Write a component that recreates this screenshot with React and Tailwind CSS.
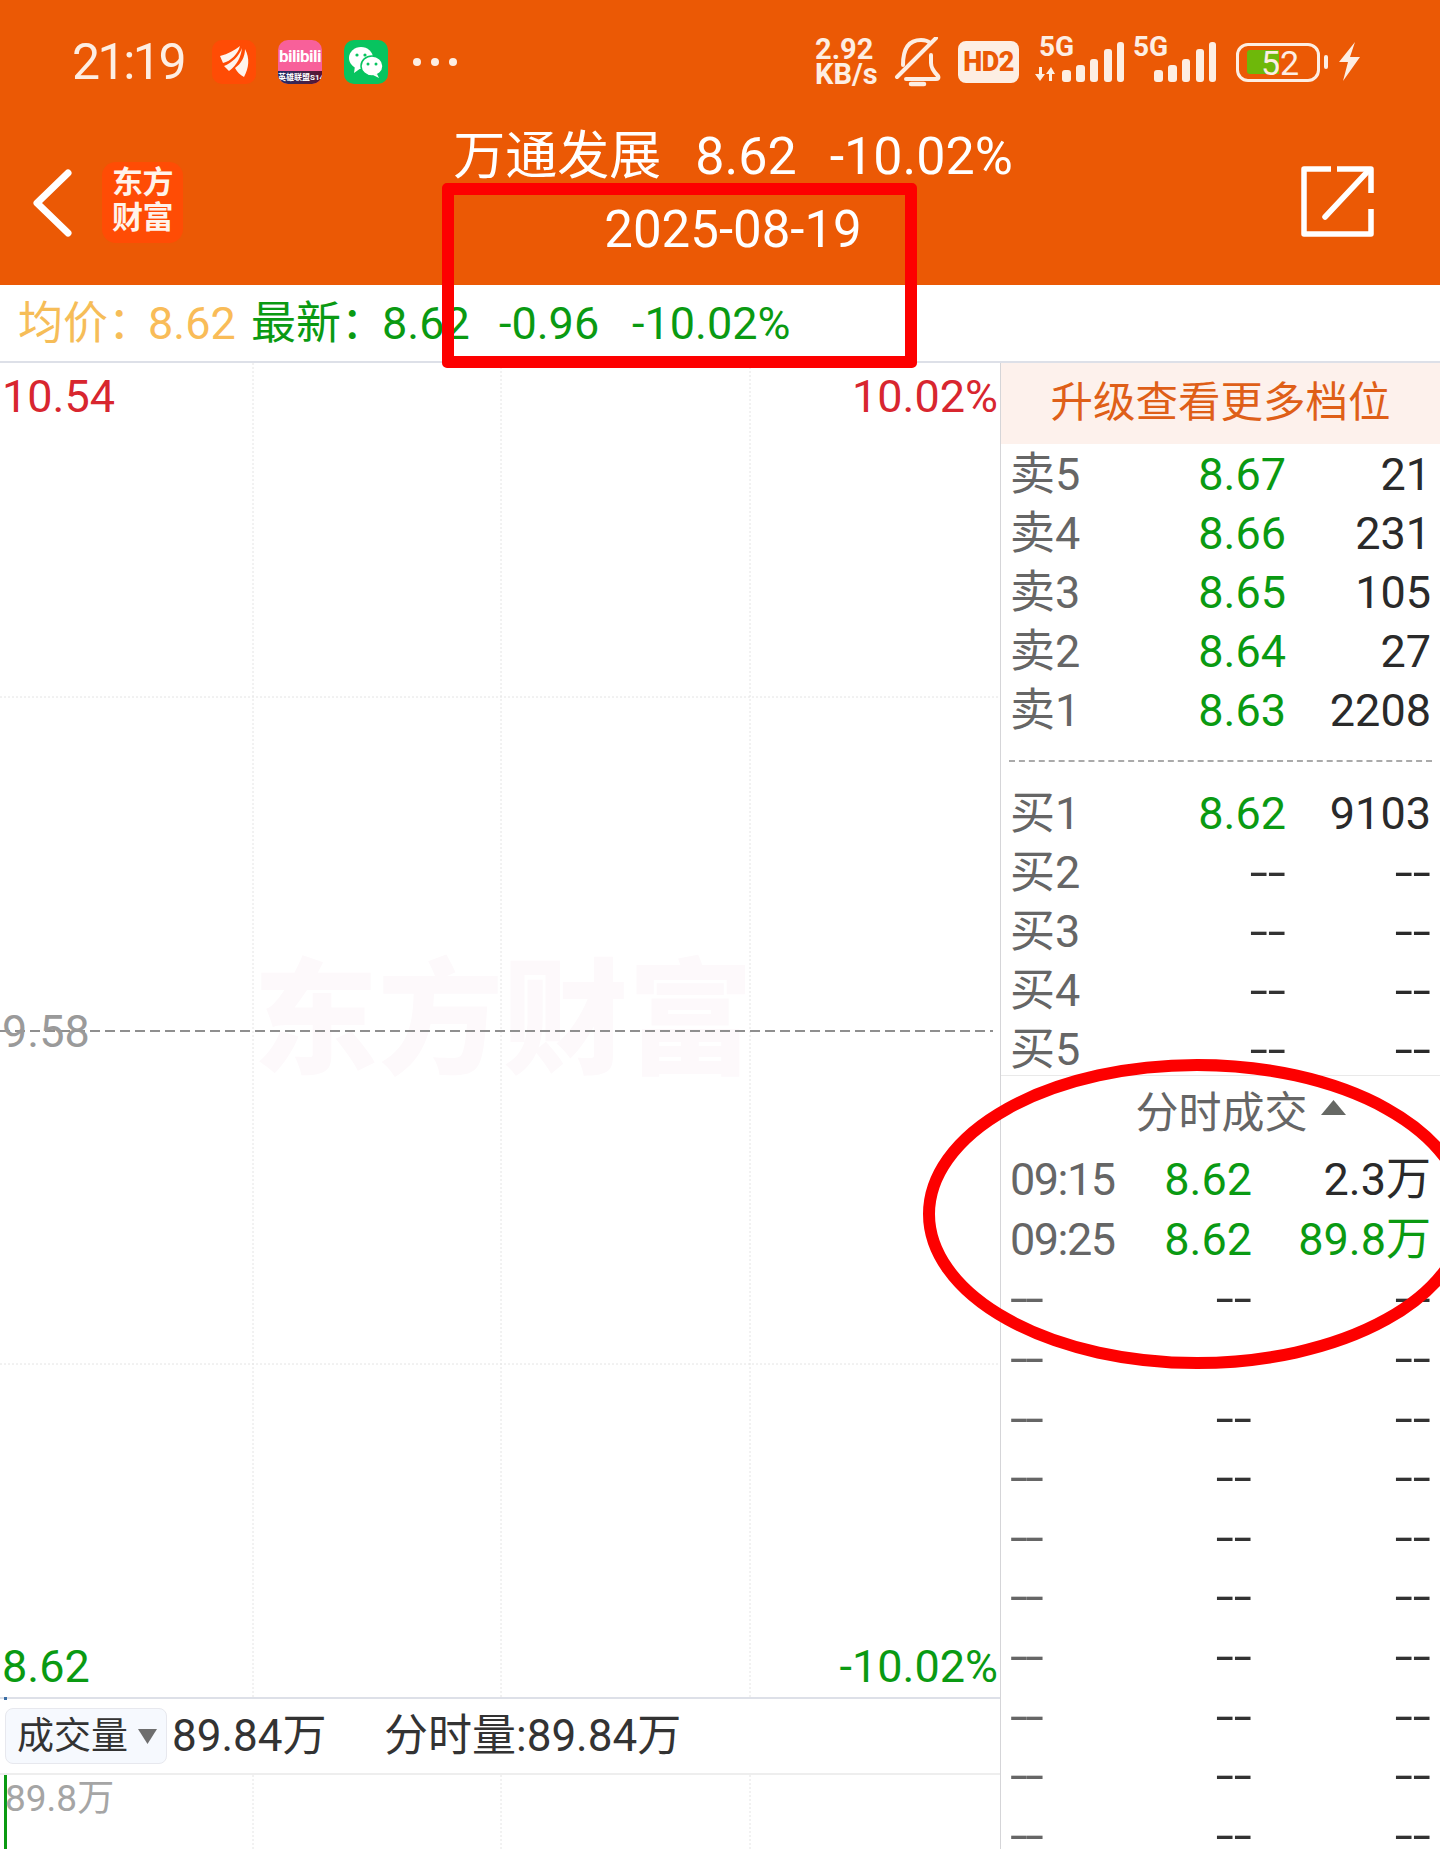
import React from 'react';

const FONT = "font-['Roboto','Noto_Sans_CJK_SC',sans-serif]";

const sells = [
  ['卖5', '8.67', '21'],
  ['卖4', '8.66', '231'],
  ['卖3', '8.65', '105'],
  ['卖2', '8.64', '27'],
  ['卖1', '8.63', '2208'],
];

const buys = [
  ['买1', '8.62', '9103'],
  ['买2', '--', '--'],
  ['买3', '--', '--'],
  ['买4', '--', '--'],
  ['买5', '--', '--'],
];

const trades = [
  ['09:15', '8.62', '2.3万', 'text-[#2a2a2a]'],
  ['09:25', '8.62', '89.8万', 'text-[#0a9a12]'],
  ...Array.from({ length: 10 }, () => ['--', '--', '--', 'text-[#333]']),
];

// the two hyphens are wider in the phone font
const Val = ({ v, left }) => {
  if (v !== '--') return v;
  return (
    <span className={left ? 'inline-block origin-left scale-x-[1.45]' : 'inline-block origin-right scale-x-[1.45]'}>--</span>
  );
};

const BellOff = () => (
  <svg width="47" height="50" viewBox="0 0 47 50" fill="none" stroke="#fdeee3" strokeWidth="4" strokeLinecap="round" strokeLinejoin="round">
    <path d="M9 28C9 12 15 3 27 3C31 3 34 4 36 6" />
    <path d="M37 18V26C37 32 41 36 44 39C45 41 44 42 42 42H12" />
    <path d="M42 1L3 40" />
    <path d="M17 47H30" strokeWidth="4.5" />
  </svg>
);

const SignalBars = () => (
  <svg width="62" height="40" viewBox="0 0 62 40" fill="#fdeee3">
    <rect x="0" y="28" width="9" height="12" rx="3" />
    <rect x="14" y="23" width="9" height="17" rx="3" />
    <rect x="28" y="17" width="8" height="23" rx="3" />
    <rect x="42" y="7" width="8" height="33" rx="3" />
    <rect x="55" y="0" width="7" height="40" rx="3" />
  </svg>
);

const StatusBar = () => (
  <div className="flex h-[124px] items-center pl-[72px] text-[#fdeee3]">
    <span className="w-[140px] text-[50px] leading-none tracking-[-2.5px]">21:19</span>
    <svg width="44" height="44" viewBox="0 0 44 44">
      <rect width="44" height="44" rx="10" fill="#ff4c05" />
      <g fill="#fff4ec">
        <path d="M8 16C16 14 23 10 28 6C26 14 19 21 11 23Z" />
        <path d="M30 8C29 17 25 25 17 31L12 26C20 23 27 16 30 8Z" />
        <path d="M33 9C38 18 37 28 32 37C28 35 25 32 23 28C29 24 33 17 33 9Z" />
      </g>
    </svg>
    <div className="ml-[22px] flex h-[44px] w-[44px] flex-col items-center overflow-hidden rounded-[10px] bg-[#f8609a]">
      <span className="mt-[5px] h-[26px] text-[17px] leading-[22px] font-bold tracking-[-0.5px] text-white">bilibili</span>
      <span className="h-[13px] w-full bg-gradient-to-r from-[#1c2a6a] to-[#5a1030] text-center text-[8px] leading-[13px] font-bold whitespace-nowrap text-white">英雄联盟S14</span>
    </div>
    <div className="ml-[22px] flex h-[44px] w-[44px] items-center justify-center rounded-[10px] bg-[#07c45f]">
      <svg width="36" height="32" viewBox="0 0 36 32">
        <ellipse cx="13" cy="12" rx="12" ry="11" fill="#fff" />
        <path d="M7 20L6 27L13 22Z" fill="#fff" />
        <ellipse cx="24" cy="20" rx="11" ry="10" fill="#fff" stroke="#07c45f" strokeWidth="1.5" />
        <path d="M29 28L31 32L25 29Z" fill="#fff" />
        <circle cx="9" cy="9" r="1.6" fill="#07c45f" />
        <circle cx="17" cy="9" r="1.6" fill="#07c45f" />
        <circle cx="20" cy="18" r="1.5" fill="#07c45f" />
        <circle cx="28" cy="18" r="1.5" fill="#07c45f" />
      </svg>
    </div>
    <div className="ml-[25px] flex gap-[10px]">
      <span className="h-[8px] w-[8px] rounded-full bg-[#fdeee3]" />
      <span className="h-[8px] w-[8px] rounded-full bg-[#fdeee3]" />
      <span className="h-[8px] w-[8px] rounded-full bg-[#fdeee3]" />
    </div>

    <div className="ml-auto flex h-[50px] items-center pr-[79px]">
      <div className="w-[64px] text-[29px] leading-[25px] font-bold whitespace-nowrap">
        2.92<br />KB/s
      </div>
      <div className="ml-[15px]"><BellOff /></div>
      <div className="ml-[17px] flex h-[42px] w-[61px] items-center justify-center rounded-[8px] bg-[#fdeee3] text-[27px] font-black tracking-[-0.5px] text-[#eb5905]">
        HD2
      </div>
      <div className="relative ml-[15px] h-[44px] w-[90px]">
        <span className="absolute top-[-7px] left-[5px] text-[28px] leading-[28px] font-bold">5G</span>
        <svg className="absolute top-[26px] left-0" width="26" height="16" viewBox="0 0 26 16" fill="#fdeee3">
          <path d="M5 1V8H1L6 15L11 8H8V1Z" />
          <path d="M17 1L12 8H15V15H18V8H21Z" />
        </svg>
        <div className="absolute top-[2px] left-[28px]"><SignalBars /></div>
      </div>
      <div className="relative ml-[9px] h-[44px] w-[85px]">
        <span className="absolute top-[-7px] left-0 text-[28px] leading-[28px] font-bold">5G</span>
        <div className="absolute top-[2px] left-[21px]"><SignalBars /></div>
      </div>
      <div className="relative ml-[18px] flex h-[39px] w-[84px] items-center rounded-[12px] border-[3px] border-[#fdeee3] p-[4px]">
        <div className="ml-[4px] h-[24px] w-[32px] rounded-l-[3px] bg-[#6eb80a]" />
        <span className="absolute top-[-3px] left-[22px] text-[34px] leading-[40px]">52</span>
      </div>
      <span className="ml-[4px] h-[14px] w-[4px] rounded-full bg-[#fdeee3]" />
      <svg className="ml-[10px]" width="23" height="40" viewBox="0 0 23 40" fill="#fdeee3">
        <path d="M17 0L1 20H10L5 39L22 15H12Z" />
      </svg>
    </div>
  </div>
);

const TitleBar = () => (
  <div className="relative h-[161px]">
    <div className="flex flex-col items-center pl-[26px] text-white">
      <div className="mt-[4px] flex h-[58px] items-center text-[52px] leading-none whitespace-nowrap">
        <span>万通发展</span>
        <span className="ml-[34px]">8.62</span>
        <span className="ml-[33px]">-10.02%</span>
      </div>
      <div className="mt-[14px] text-[51px] leading-[60px]">2025-08-19</div>
    </div>
    <svg className="absolute top-[45px] left-[30px]" width="44" height="68" viewBox="0 0 44 68" fill="none" stroke="#fff" strokeWidth="7" strokeLinecap="round" strokeLinejoin="round">
      <path d="M38 4L7 34L38 64" />
    </svg>
    <div className="absolute top-[38px] left-[102px] flex h-[81px] w-[81px] items-center justify-center rounded-[14px] bg-[#ff4c05] pb-[5px] text-center text-[31px] leading-[35px] font-bold tracking-[-0.5px] text-[#fff3ea]">
      <span>东方<br />财富</span>
    </div>
    <svg className="absolute top-[41px] left-[1300px]" width="74" height="74" viewBox="0 0 74 74" fill="none" stroke="#fff" strokeWidth="5.5" strokeLinejoin="round">
      <path d="M31 4H4V69H71V44" />
      <path d="M37 4H71V28" />
      <path d="M25 52L69 5" strokeLinecap="round" />
    </svg>
  </div>
);

const InfoBar = () => (
  <div className="flex h-[76px] items-center pl-[18px] text-[45px] leading-none whitespace-nowrap text-[#0a9a12]">
    <span className="w-[130px] text-[#f6bd58]">均价：</span>
    <span className="w-[103px] text-[#f9bc58]">8.62</span>
    <span className="w-[131px]">最新：</span>
    <span className="w-[117px]">8.62</span>
    <span className="w-[133px]">-0.96</span>
    <span>-10.02%</span>
  </div>
);

const ChartGrid = ({ height, rows = [] }) => (
  <svg className="absolute top-0 left-0" width="1000" height={height}>
    {[253, 501, 750].map(x => (
      <line key={x} x1={x} x2={x} y1="0" y2={height} stroke="#e4e4e4" strokeDasharray="2 2" />
    ))}
    {rows.map(y => (
      <line key={y} x1="0" x2="1000" y1={y} y2={y} stroke="#e4e4e4" strokeDasharray="2 2" />
    ))}
  </svg>
);

const Chart = () => (
  <div className="flex w-[1000px] flex-col">
    <div className="relative h-[1334px] shrink-0">
      <ChartGrid height={1334} rows={[334, 1001]} />
      <div className="absolute top-[596px] left-[253px] text-[125px] leading-none font-black whitespace-nowrap text-[#fdf9fb]">东方财富</div>
      <svg className="absolute top-[666px] left-0" width="1000" height="4">
        <line x1="0" x2="993" y1="2" y2="2" stroke="#8f8f8f" strokeWidth="2" strokeDasharray="10 5" />
      </svg>
      <span className="absolute top-[4px] left-[2px] text-[45px] leading-[60px] text-[#d8262f]">10.54</span>
      <span className="absolute top-[4px] right-[2px] text-[45px] leading-[60px] text-[#d8262f]">10.02%</span>
      <span className="absolute top-[639px] left-[2px] text-[45px] leading-[60px] text-[#9a9a9a]">9.58</span>
      <span className="absolute top-[1274px] left-[2px] text-[45px] leading-[60px] text-[#0a9a12]">8.62</span>
      <span className="absolute top-[1274px] right-[2px] text-[45px] leading-[60px] text-[#0a9a12]">-10.02%</span>
    </div>
    <div className="relative flex h-[78px] shrink-0 items-center border-t-2 border-b-2 border-t-[#dde0e8] border-b-[#eeeeee] pl-[5px] text-[44px] leading-none text-[#333]">
      <span className="absolute top-[-2px] left-[4px] h-[3px] w-[3px] bg-[#3b6ea5]" />
      <div className="flex h-[56px] w-[162px] items-center rounded-[8px] border border-[#e7e8ee] bg-[#f6f9fe] pl-[11px] text-[37px]">
        <span>成交量</span>
        <svg className="ml-[10px]" width="19" height="15" viewBox="0 0 19 15" fill="#6e6e6e">
          <path d="M0 0H19L9.5 15Z" />
        </svg>
      </div>
      <span className="ml-[5px] w-[212px]">89.84万</span>
      <span>分时量:89.84万</span>
    </div>
    <div className="relative flex-1">
      <ChartGrid height={77} />
      <div className="absolute top-0 left-[4px] h-full w-[3px] bg-[#0a9a12]" />
      <span className="absolute top-[2px] left-[5px] text-[37px] leading-[44px] text-[#a5a5a5]">89.8万</span>
    </div>
  </div>
);

const DepthRow = ({ row }) => (
  <div className="flex h-[59px] items-center px-[9px]">
    <span className="flex-1 text-[#666]">{row[0]}</span>
    <span className={row[1] === '--' ? 'w-[100px] text-right text-[#333]' : 'w-[100px] text-right text-[#0a9a12]'}><Val v={row[1]} /></span>
    <span className="w-[145px] text-right text-[#2a2a2a]"><Val v={row[2]} /></span>
  </div>
);

const SidePanel = () => (
  <div className="flex h-full w-[440px] flex-col border-l border-[#d5d5d8] text-[45px] leading-none">
    <div className="flex h-[81px] shrink-0 items-center justify-center bg-[#fdf1ec] text-[42.5px] text-[#df5f18]">
      升级查看更多档位
    </div>
    <div className="mt-[1px] shrink-0">
      {sells.map(r => <DepthRow key={r[0]} row={r} />)}
    </div>
    <div className="mx-[8px] mt-[20px] shrink-0 border-t-2 border-dashed border-[#aaaaaa]" />
    <div className="mt-[22px] h-[291px] shrink-0">
      {buys.map(r => <DepthRow key={r[0]} row={r} />)}
    </div>
    <div className="flex h-[75px] shrink-0 items-center justify-center border-t border-[#e9e9e9] pl-[40px] text-[43px] text-[#666]">
      <span>分时成交</span>
      <svg className="mb-[12px] ml-[13px]" width="25" height="15" viewBox="0 0 25 15" fill="#666864">
        <path d="M12.5 0L25 15H0Z" />
      </svg>
    </div>
    <div className="shrink-0">
      {trades.map((t, i) => (
        <div key={i} className="flex h-[59.6px] items-center px-[9px]">
          <span className="flex-1 tracking-[-1.5px] text-[#666]"><Val v={t[0]} left /></span>
          <span className={t[1] === '--' ? 'w-[100px] text-right text-[#333]' : 'w-[100px] text-right text-[#0a9a12]'}><Val v={t[1]} /></span>
          <span className={`w-[179px] text-right ${t[3]}`}><Val v={t[2]} /></span>
        </div>
      ))}
    </div>
  </div>
);

export default function App() {
  return (
    <div className={`relative h-[1849px] w-[1440px] overflow-hidden bg-white ${FONT}`}>
      <div className="bg-[#eb5905]">
        <StatusBar />
        <TitleBar />
      </div>
      <InfoBar />
      <div className="flex h-[1488px] overflow-hidden border-t-2 border-[#dde0e8]">
        <Chart />
        <SidePanel />
      </div>

      {/* красные пометки поверх скриншота */}
      <div className="absolute top-[183px] left-[442px] h-[185px] w-[475px] rounded-[5px] border-[12px] border-[#fd0000]" />
      <svg className="absolute top-[1050px] left-[910px]" width="530" height="330" fill="none">
        <ellipse cx="287" cy="164" rx="268" ry="149" stroke="#fd0000" strokeWidth="12" />
      </svg>
    </div>
  );
}
